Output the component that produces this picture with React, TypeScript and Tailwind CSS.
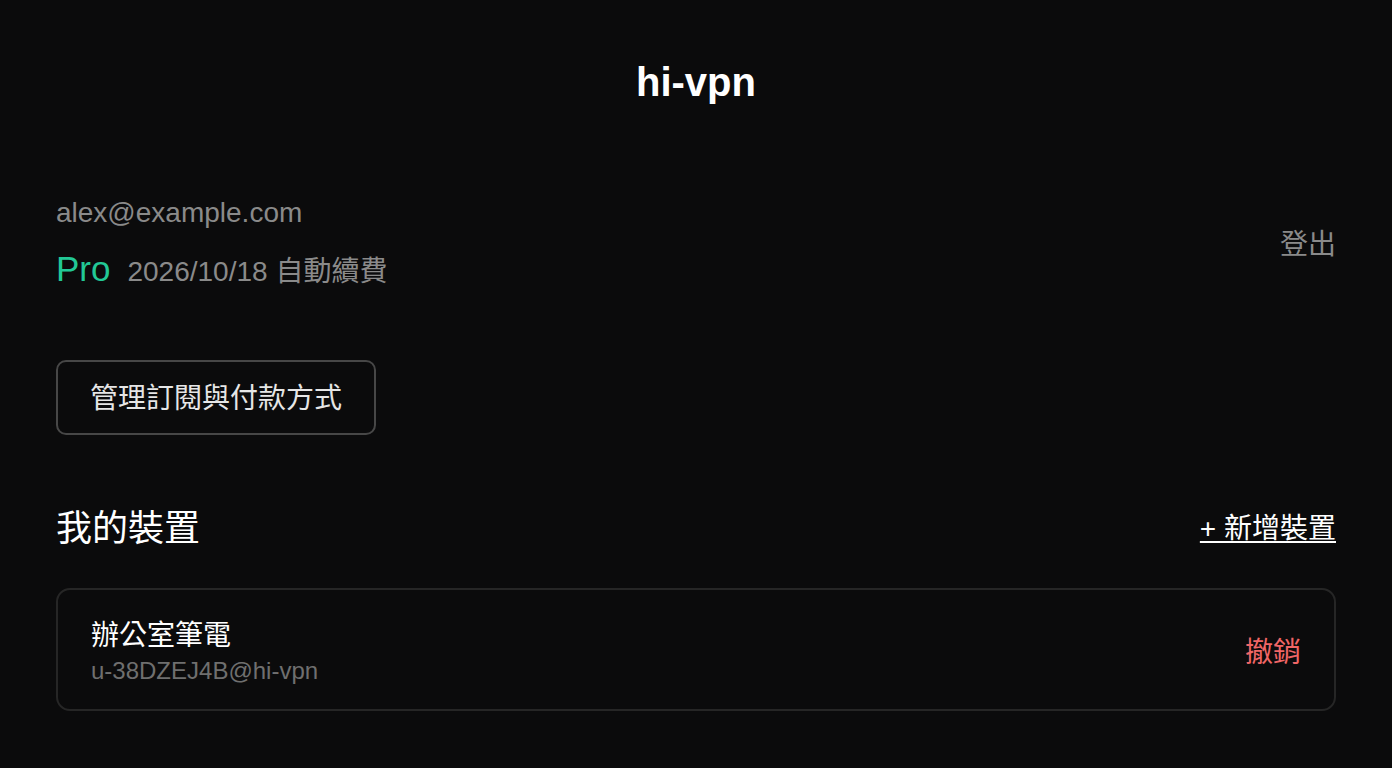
import React from 'react';

const FONT = "font-['Liberation_Sans','Noto_Sans_CJK_TC',sans-serif]";

const Account = () => (
  <section className="mt-[94px] flex items-center justify-between">
    <div>
      <div className="text-[28px] leading-[34px] text-[#8a8a8a]">alex@example.com</div>
      <div className="mt-[18px] flex items-baseline gap-[17px] leading-[42px]">
        <span className="text-[35px] text-[#22c896]">Pro</span>
        <span className="text-[28px] text-[#8a8a8a]">2026/10/18 自動續費</span>
      </div>
    </div>
    <button className="text-[28px] leading-[34px] text-[#8a8a8a]">登出</button>
  </section>
);

const DeviceCard = ({ name, id }: { name: string; id: string }) => (
  <div className="flex items-center justify-between rounded-[14px] border-2 border-[#262626] pt-[29px] pb-[23px] pl-[33px] pr-[33px]">
    <div>
      <div className="text-[28px] leading-[34px] text-white">{name}</div>
      <div className="mt-[3px] text-[24px] leading-[30px] text-[#6f6f6f]">{id}</div>
    </div>
    <button className="text-[28px] leading-[34px] text-[#f06666]">撤銷</button>
  </div>
);

export default function App() {
  return (
    <div className={`min-h-screen bg-[#0b0b0c] px-[56px] ${FONT}`}>
      {/* Header */}
      <h1 className="pt-[62px] text-center text-[40px] font-bold leading-[40px] text-white">hi-vpn</h1>

      <Account />

      <div className="mt-[67px] flex">
        <button className="h-[75px] rounded-[10px] border-2 border-[#474747] px-[32px] pt-[2px] text-[28px] text-[#e6e6e6]">
          管理訂閱與付款方式
        </button>
      </div>

      {/* Devices */}
      <div className="mt-[72px] flex items-center justify-between">
        <h2 className="text-[36px] leading-[44px] text-white">我的裝置</h2>
        <a className="text-[28px] leading-[34px] text-white underline underline-offset-[3px]" href="#">
          + 新增裝置
        </a>
      </div>

      <div className="mt-[37px]">
        <DeviceCard name="辦公室筆電" id="u-38DZEJ4B@hi-vpn" />
      </div>
    </div>
  );
}
